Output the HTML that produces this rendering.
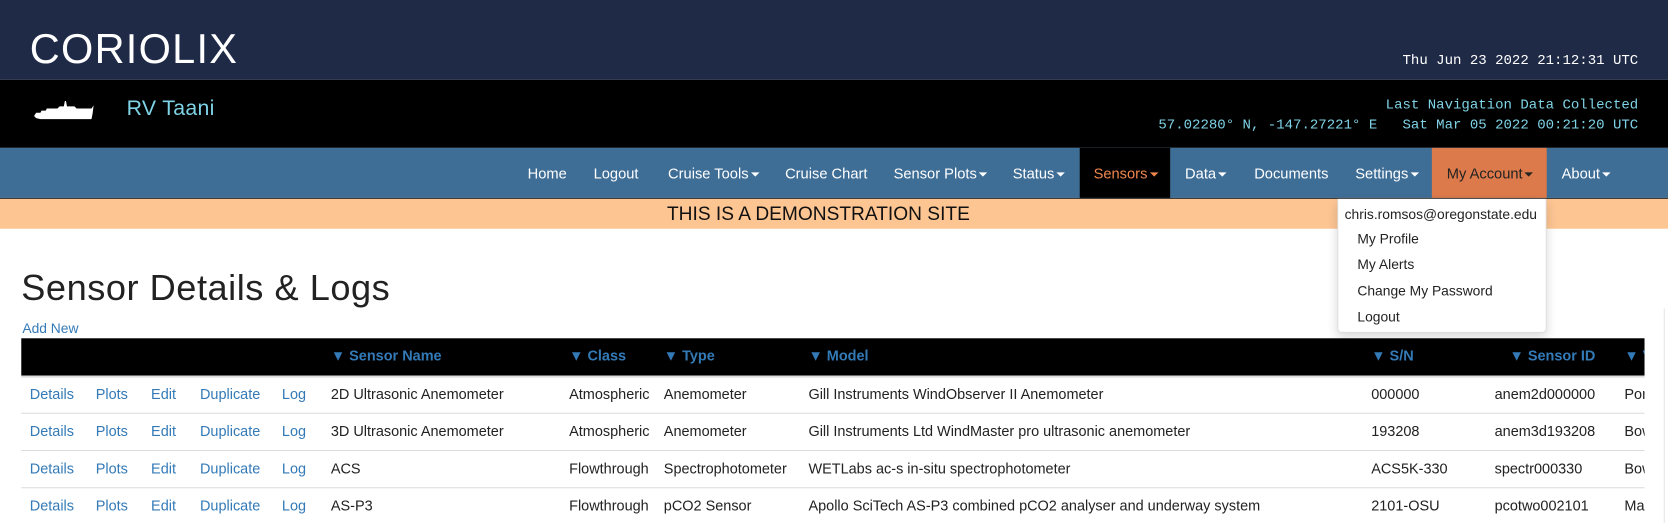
<!DOCTYPE html>
<html><head><meta charset="utf-8"><style>
*{margin:0;padding:0;box-sizing:border-box}
html,body{width:1668px;height:523px;overflow:hidden;background:#fff}
body{font-family:"Liberation Sans",Arial,sans-serif}
#w{position:absolute;left:0;top:0;width:1568px;height:492px;transform:scale(1.06378);transform-origin:0 0;overflow:hidden}
.a{position:absolute;white-space:nowrap}
.mono{font-family:"Liberation Mono",monospace}
.nav{font-size:13.8px;color:#fff;top:156px}
.car{display:inline-block;width:0;height:0;border-left:4px solid transparent;border-right:4px solid transparent;border-top:4px solid currentColor;vertical-align:middle;margin-left:2px}
.th{color:#337ab7;font-weight:bold;font-size:13.6px;top:327px}
.td{font-size:13.6px;color:#222}
.lk{color:#337ab7}
.hr{position:absolute;left:20px;width:1526px;height:1px;background:#ddd}
</style></head><body><div id="w">
<div class="a" style="left:0;top:0;width:1568px;height:75px;background:#1f2a47"></div>
<div class="a" style="left:28px;top:25px;font-size:39px;color:#fff;letter-spacing:1.2px">CORIOLIX</div>
<div class="a mono" style="right:28px;top:49px;font-size:13.2px;color:#fff">Thu Jun 23 2022 21:12:31 UTC</div>
<div class="a" style="left:0;top:75px;width:1568px;height:64px;background:#000"></div>
<svg class="a" style="left:30px;top:92px" width="60" height="24" viewBox="0 0 60 24"><path d="M2 17 L4 14 L8 14 L9 12 L13 12 L14 10 L24 10 L26 8 L30 8 L31 3 L32 3 L33 8 L40 8 L42 10 L56 10 L58 7 L57 15 L56 20 L8 20 L4 19 Z" fill="#fff"/></svg>
<div class="a" style="left:119px;top:91px;font-size:20px;color:#7fd3e6;letter-spacing:.3px">RV Taani</div>
<div class="a mono" style="right:28px;top:91px;font-size:13.2px;color:#7fd3e6">Last Navigation Data Collected</div>
<div class="a mono" style="right:28px;top:110px;font-size:13.2px;color:#7fd3e6">57.02280° N, -147.27221° E&nbsp;&nbsp; Sat Mar 05 2022 00:21:20 UTC</div>
<div class="a" style="left:0;top:139px;width:1568px;height:47px;background:#3e6d96"></div>
<div class="a" style="left:0;top:186px;width:1568px;height:1px;background:#222"></div>
<div class="a" style="left:1015px;top:139px;width:85px;height:47px;background:#000"></div>
<div class="a" style="left:1346px;top:139px;width:108px;height:47px;background:#dc7a4b"></div>
<div class="a nav" style="left:496px">Home</div>
<div class="a nav" style="left:558px">Logout</div>
<div class="a nav" style="left:628px">Cruise Tools<span class="car"></span></div>
<div class="a nav" style="left:738px">Cruise Chart</div>
<div class="a nav" style="left:840px">Sensor Plots<span class="car"></span></div>
<div class="a nav" style="left:952px">Status<span class="car"></span></div>
<div class="a nav" style="left:1028px;color:#f0874e">Sensors<span class="car"></span></div>
<div class="a nav" style="left:1114px">Data<span class="car"></span></div>
<div class="a nav" style="left:1179px">Documents</div>
<div class="a nav" style="left:1274px">Settings<span class="car"></span></div>
<div class="a nav" style="left:1360px;color:#222">My Account<span class="car"></span></div>
<div class="a nav" style="left:1468px">About<span class="car"></span></div>
<div class="a" style="left:0;top:187px;width:1568px;height:28px;background:#fdc592"></div>
<div class="a" style="left:627px;top:191px;font-size:18px;color:#111">THIS IS A DEMONSTRATION SITE</div>
<div class="a" style="left:20px;top:252px;font-size:34px;color:#222;letter-spacing:.5px">Sensor Details &amp; Logs</div>
<div class="a lk" style="left:21px;top:301px;font-size:13px">Add New</div>
<div style="position:absolute;left:0;top:0;width:1546px;height:492px;overflow:hidden">
<div class="a" style="left:20px;top:318px;width:1526px;height:35px;background:#000"></div>
<div class="a" style="left:20px;top:353px;width:1526px;height:2px;background:#ddd"></div>
<div class="a th" style="left:311px">▼ Sensor Name</div>
<div class="a th" style="left:535px">▼ Class</div>
<div class="a th" style="left:624px">▼ Type</div>
<div class="a th" style="left:760px">▼ Model</div>
<div class="a th" style="left:1289px">▼ S/N</div>
<div class="a th" style="left:1419px">▼ Sensor ID</div>
<div class="a th" style="left:1527px">▼ Vendor</div>
<div class="hr" style="top:388px"></div><div class="hr" style="top:423px"></div><div class="hr" style="top:458px"></div>
<div class="a td lk" style="top:363px;left:28px">Details</div><div class="a td lk" style="top:363px;left:90px">Plots</div><div class="a td lk" style="top:363px;left:142px">Edit</div><div class="a td lk" style="top:363px;left:188px">Duplicate</div><div class="a td lk" style="top:363px;left:265px">Log</div>
<div class="a td" style="top:363px;left:311px">2D Ultrasonic Anemometer</div><div class="a td" style="top:363px;left:535px">Atmospheric</div><div class="a td" style="top:363px;left:624px">Anemometer</div><div class="a td" style="top:363px;left:760px">Gill Instruments WindObserver II Anemometer</div><div class="a td" style="top:363px;left:1289px">000000</div><div class="a td" style="top:363px;left:1405px">anem2d000000</div><div class="a td" style="top:363px;left:1527px">Port</div>
<div class="a td lk" style="top:398px;left:28px">Details</div><div class="a td lk" style="top:398px;left:90px">Plots</div><div class="a td lk" style="top:398px;left:142px">Edit</div><div class="a td lk" style="top:398px;left:188px">Duplicate</div><div class="a td lk" style="top:398px;left:265px">Log</div>
<div class="a td" style="top:398px;left:311px">3D Ultrasonic Anemometer</div><div class="a td" style="top:398px;left:535px">Atmospheric</div><div class="a td" style="top:398px;left:624px">Anemometer</div><div class="a td" style="top:398px;left:760px">Gill Instruments Ltd WindMaster pro ultrasonic anemometer</div><div class="a td" style="top:398px;left:1289px">193208</div><div class="a td" style="top:398px;left:1405px">anem3d193208</div><div class="a td" style="top:398px;left:1527px">Bow</div>
<div class="a td lk" style="top:433px;left:28px">Details</div><div class="a td lk" style="top:433px;left:90px">Plots</div><div class="a td lk" style="top:433px;left:142px">Edit</div><div class="a td lk" style="top:433px;left:188px">Duplicate</div><div class="a td lk" style="top:433px;left:265px">Log</div>
<div class="a td" style="top:433px;left:311px">ACS</div><div class="a td" style="top:433px;left:535px">Flowthrough</div><div class="a td" style="top:433px;left:624px">Spectrophotometer</div><div class="a td" style="top:433px;left:760px">WETLabs ac-s in-situ spectrophotometer</div><div class="a td" style="top:433px;left:1289px">ACS5K-330</div><div class="a td" style="top:433px;left:1405px">spectr000330</div><div class="a td" style="top:433px;left:1527px">Bow</div>
<div class="a td lk" style="top:468px;left:28px">Details</div><div class="a td lk" style="top:468px;left:90px">Plots</div><div class="a td lk" style="top:468px;left:142px">Edit</div><div class="a td lk" style="top:468px;left:188px">Duplicate</div><div class="a td lk" style="top:468px;left:265px">Log</div>
<div class="a td" style="top:468px;left:311px">AS-P3</div><div class="a td" style="top:468px;left:535px">Flowthrough</div><div class="a td" style="top:468px;left:624px">pCO2 Sensor</div><div class="a td" style="top:468px;left:760px">Apollo SciTech AS-P3 combined pCO2 analyser and underway system</div><div class="a td" style="top:468px;left:1289px">2101-OSU</div><div class="a td" style="top:468px;left:1405px">pcotwo002101</div><div class="a td" style="top:468px;left:1527px">Main</div>
</div>
<div class="a" style="left:1564px;top:290px;width:1px;height:210px;background:#e5e5e5"></div>
<div class="a" style="left:1257px;top:187px;width:197px;height:126px;background:#fff;border:1px solid #ddd;border-top:none;border-radius:0 0 4px 4px;box-shadow:0 4px 10px rgba(0,0,0,.15)"></div>
<div class="a" style="left:1264px;top:194px;font-size:13px;color:#222">chris.romsos@oregonstate.edu</div>
<div class="a" style="left:1276px;top:217px;font-size:13px;color:#222">My Profile</div>
<div class="a" style="left:1276px;top:241px;font-size:13px;color:#222">My Alerts</div>
<div class="a" style="left:1276px;top:266px;font-size:13px;color:#222">Change My Password</div>
<div class="a" style="left:1276px;top:290px;font-size:13px;color:#222">Logout</div>
</div></body></html>
